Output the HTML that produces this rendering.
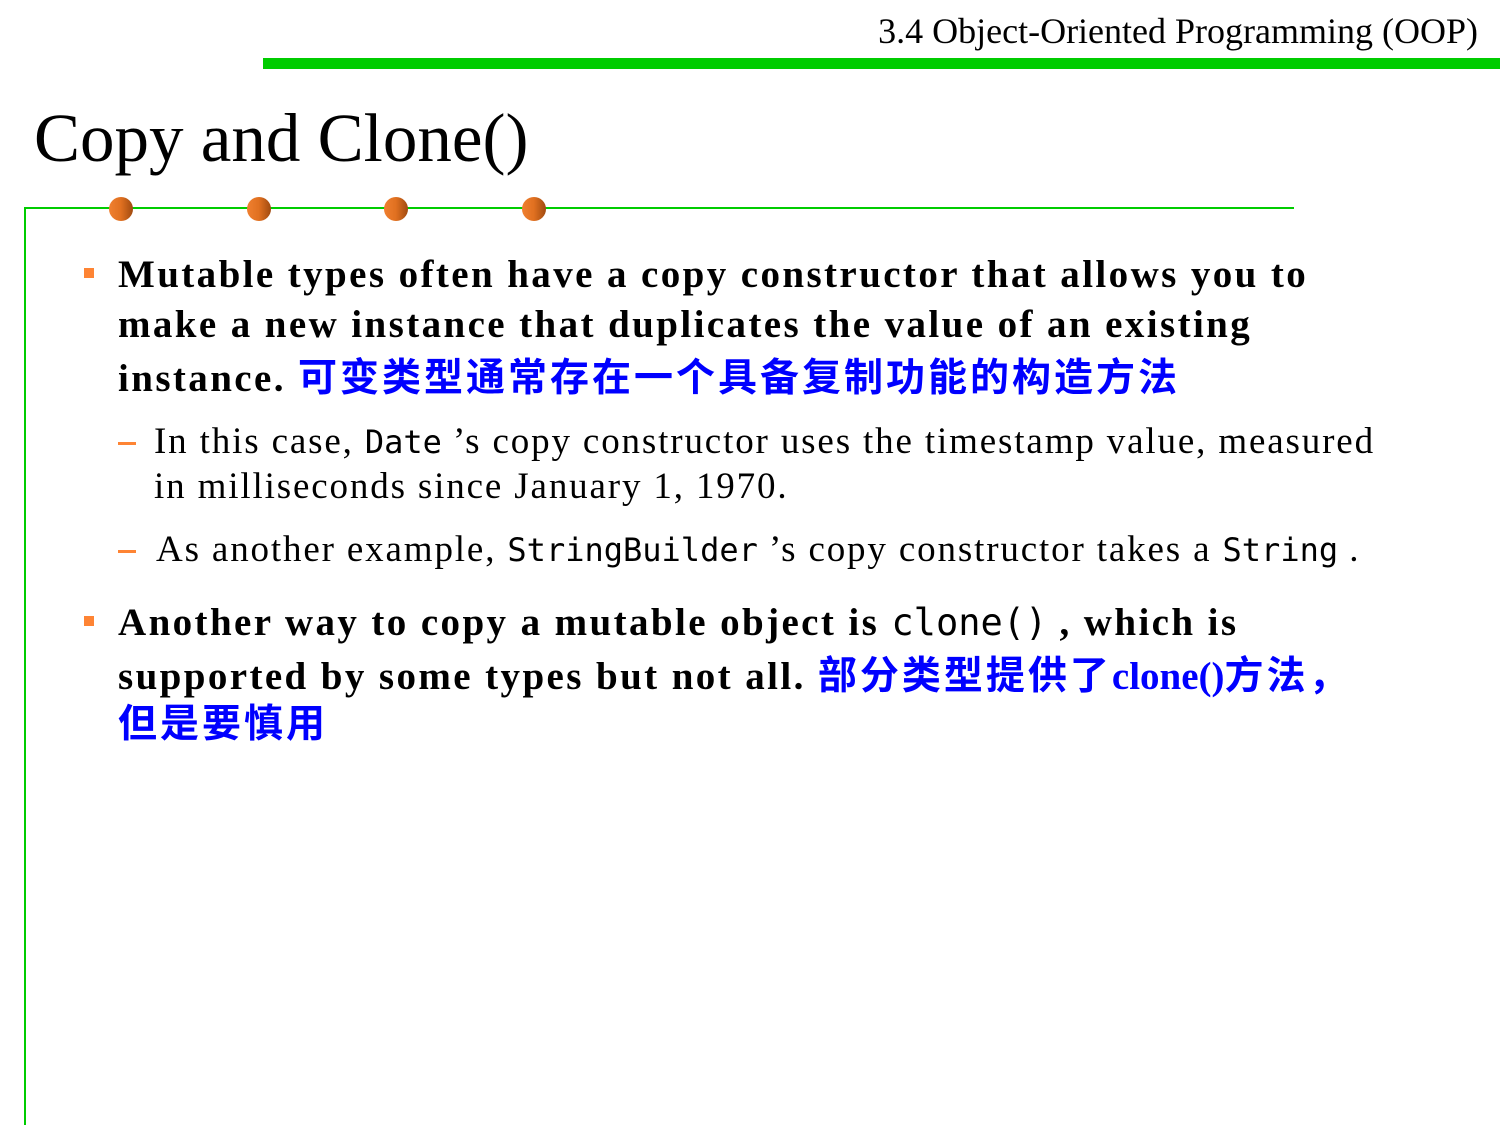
<!DOCTYPE html>
<html><head><meta charset="utf-8"><style>
body{margin:0;width:1500px;height:1125px;background:#fff;position:relative;overflow:hidden;font-family:"Liberation Serif","Noto Serif CJK SC",serif;color:#000}
.a{position:absolute;white-space:nowrap;line-height:46px}
.b{font-weight:bold;font-size:39px;letter-spacing:2.4px}
.s{font-size:37px;letter-spacing:1.85px}
.m{font-family:"DejaVu Sans Mono","Liberation Mono",monospace;font-size:32px;letter-spacing:0}
.cn{color:#0000ff;font-family:"Noto Sans CJK SC","Noto Serif CJK SC",sans-serif;font-weight:bold;font-size:39px;letter-spacing:3px}
.dot{position:absolute;top:197px;width:24px;height:24px;border-radius:50%;background:linear-gradient(90deg,#f08030,#e07020 50%,#a04a10)}
.sq{position:absolute;width:10px;height:10px;background:#fe8434}
.dash{position:absolute;width:18px;height:3px;background:#fe8434}
</style></head><body>
<div class="a" style="right:22px;top:8px;font-size:36px">3.4 Object-Oriented Programming (OOP)</div>
<div style="position:absolute;left:263px;top:58px;width:1237px;height:11px;background:#00cc00"></div>
<div class="a" style="left:34px;top:108px;font-size:69px;line-height:60px">Copy and Clone()</div>
<div style="position:absolute;left:24px;top:207px;width:1270px;height:2px;background:#00cc00"></div>
<div style="position:absolute;left:24px;top:207px;width:2px;height:918px;background:#00cc00"></div>
<div class="dot" style="left:109px"></div><div class="dot" style="left:247px"></div><div class="dot" style="left:384px"></div><div class="dot" style="left:522px"></div>

<div class="sq" style="left:84px;top:268px"></div>
<div class="a b" style="left:118px;top:252px">Mutable types often have a copy constructor that allows you to</div>
<div class="a b" style="left:118px;top:302px">make a new instance that duplicates the value of an existing</div>
<div class="a b" style="left:118px;top:352px">instance. <span class="cn">可变类型通常存在一个具备复制功能的构造方法</span></div>

<div class="dash" style="left:118px;top:442px"></div>
<div class="a s" style="left:154px;top:419px">In this case, <span class="m">Date</span> ’s copy constructor uses the timestamp value, measured</div>
<div class="a s" style="left:154px;top:464px">in milliseconds since January 1, 1970.</div>
<div class="dash" style="left:118px;top:550px"></div>
<div class="a s" style="left:156px;top:527px">As another example, <span class="m">StringBuilder</span> ’s copy constructor takes a <span class="m">String</span> .</div>

<div class="sq" style="left:84px;top:616px"></div>
<div class="a b" style="left:118px;top:600px">Another way to copy a mutable object is <span class="m" style="font-weight:normal;font-size:37px">clone()</span> , which is</div>
<div class="a b" style="left:118px;top:650px">supported by some types but not all. <span class="cn">部分类型提供了<span style="font-family:'Liberation Serif',serif;letter-spacing:0">clone()</span>方法，</span></div>
<div class="a cn" style="left:118px;top:698px">但是要慎用</div>
</body></html>
